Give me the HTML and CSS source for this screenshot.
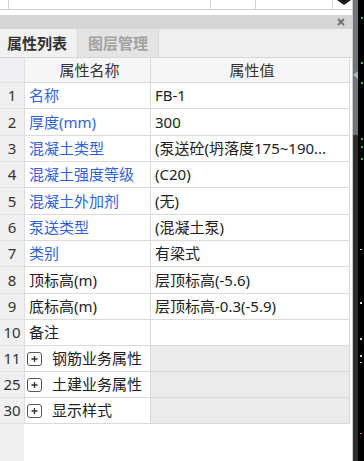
FILE: index.html
```html
<!DOCTYPE html>
<html lang="zh-CN">
<head>
<meta charset="utf-8">
<title>属性列表</title>
<link rel="stylesheet" href="styles.css">
</head>
<body>
<div class="panel">
  <div class="topstrip">
    <div class="tc c1"></div>
    <div class="tc c2"></div>
    <div class="tc c3"></div>
    <div class="tc c4"></div>
    <div class="tc c5"><svg class="drop" width="14" height="5" viewBox="0 0 14 5"><polygon points="0,0 14,0 7,5" fill="#1a1a1a"/></svg></div>
  </div>
  <div class="titlebar">
    <svg class="close" width="8" height="8" viewBox="0 0 8 8"><path d="M1 1 L7 7 M7 1 L1 7" stroke="#6f6f6f" stroke-width="1.8" fill="none"/></svg>
  </div>
  <div class="tabs">
    <div class="tab active">属性列表</div>
    <div class="tab inactive">图层管理</div>
    <div class="tabfill"></div>
  </div>
  <div class="gridwrap">
    <div class="grid">
      <div class="cell n hn"></div><div class="cell k h">属性名称</div><div class="cell v h">属性值</div>

      <div class="cell n">1</div><div class="cell k blue">名称</div><div class="cell v">FB-1</div>
      <div class="cell n">2</div><div class="cell k blue">厚度(mm)</div><div class="cell v">300</div>
      <div class="cell n">3</div><div class="cell k blue">混凝土类型</div><div class="cell v">(泵送砼(坍落度175~190...</div>
      <div class="cell n">4</div><div class="cell k blue">混凝土强度等级</div><div class="cell v">(C20)</div>
      <div class="cell n">5</div><div class="cell k blue">混凝土外加剂</div><div class="cell v">(无)</div>
      <div class="cell n">6</div><div class="cell k blue">泵送类型</div><div class="cell v">(混凝土泵)</div>
      <div class="cell n">7</div><div class="cell k blue">类别</div><div class="cell v">有梁式</div>
      <div class="cell n">8</div><div class="cell k">顶标高(m)</div><div class="cell v">层顶标高(-5.6)</div>
      <div class="cell n">9</div><div class="cell k">底标高(m)</div><div class="cell v">层顶标高-0.3(-5.9)</div>
      <div class="cell n">10</div><div class="cell k">备注</div><div class="cell v"></div>

      <div class="cell n">11</div><div class="cell k grp"><svg class="plus" width="15" height="14" viewBox="0 0 15 14"><rect x="0.5" y="0.5" width="14" height="13" rx="2.5" fill="#fff" stroke="#555"/><path d="M4.5 7 H10.5 M7.5 4 V10" stroke="#333" stroke-width="1.3"/></svg>钢筋业务属性</div><div class="cell v gv"></div>
      <div class="cell n">25</div><div class="cell k grp"><svg class="plus" width="15" height="14" viewBox="0 0 15 14"><rect x="0.5" y="0.5" width="14" height="13" rx="2.5" fill="#fff" stroke="#555"/><path d="M4.5 7 H10.5 M7.5 4 V10" stroke="#333" stroke-width="1.3"/></svg>土建业务属性</div><div class="cell v gv"></div>
      <div class="cell n">30</div><div class="cell k grp"><svg class="plus" width="15" height="14" viewBox="0 0 15 14"><rect x="0.5" y="0.5" width="14" height="13" rx="2.5" fill="#fff" stroke="#555"/><path d="M4.5 7 H10.5 M7.5 4 V10" stroke="#333" stroke-width="1.3"/></svg>显示样式</div><div class="cell v gv"></div>
    </div>
  </div>
</div>
<div class="scroll">
  <svg class="arrow" width="5" height="8" viewBox="0 0 5 8"><polygon points="5,0 5,8 0,4" fill="#b0b4b8"/></svg>
</div>
<div class="edge">
  <svg width="6" height="461" viewBox="0 0 6 461">
    <rect x="3" y="17" width="2" height="2" fill="#2fbf3a"/>
    <rect x="3" y="62" width="2" height="2" fill="#2fbf3a"/>
    <rect x="3" y="82" width="2" height="2" fill="#2fbf3a"/>
    <rect x="3" y="138" width="2" height="2" fill="#2fbf3a"/>
    <rect x="3" y="146" width="2" height="2" fill="#2fbf3a"/>
    <rect x="3" y="158" width="2" height="2" fill="#2fbf3a"/>
    <rect x="2" y="249" width="2" height="1" fill="#cfcfcf"/>
    <rect x="2" y="302" width="2" height="2" fill="#e0e0e0"/>
    <rect x="2" y="338" width="2" height="2" fill="#d0d0d0"/>
    <rect x="2" y="355" width="2" height="2" fill="#d0d0d0"/>
    <rect x="2" y="362" width="2" height="1" fill="#bbbbbb"/>
    <rect x="2" y="433" width="2" height="1" fill="#c7782c"/>
  </svg>
</div>
</body>
</html>
```

FILE: styles.css
```css
* {
  box-sizing: border-box;
  margin: 0;
  padding: 0;
}

html, body {
  width: 364px;
  height: 461px;
  overflow: hidden;
}

body {
  display: flex;
  background: #000;
  font-family: "Noto Sans", "Noto Sans CJK SC", sans-serif;
  font-size: 15px;
  color: #222;
}

.panel {
  width: 353px;
  display: flex;
  flex-direction: column;
  background: #fff;
  border-right: 1px solid #cdcdcd;
}

/* strip of the table above the panel */
.topstrip {
  height: 15px;
  display: flex;
  align-items: flex-start;
}

.tc {
  height: 10px;
  border-right: 1px solid #d2d2d2;
  border-bottom: 1px solid #d2d2d2;
}

.c1 { width: 9px; }
.c2 { width: 202px; }
.c3 { width: 45px; }
.c4 { width: 77px; }
.c5 {
  flex: 1;
  border-right: none;
  display: flex;
  align-items: flex-start;
}

.drop {
  display: block;
  margin-left: 4px;
}

.titlebar {
  height: 14px;
  background: #d5d5d5;
  display: flex;
  align-items: center;
  justify-content: flex-end;
  padding-right: 7px;
}

.close {
  display: block;
}

.tabs {
  height: 28px;
  display: flex;
  background: #efefef;
}

.tab {
  display: flex;
  align-items: center;
  font-weight: bold;
  font-size: 15px;
  line-height: 1;
}

.tab.active {
  width: 77px;
  padding-left: 7px;
  color: #333;
  background: #f1f1f1;
}

.tab.inactive {
  width: 82px;
  justify-content: center;
  color: #a2a2a2;
  background: #e4e4e4;
  border-left: 1px solid #d9d9d9;
  border-right: 1px solid #d9d9d9;
}

.tabfill {
  flex: 1;
}

.gridwrap {
  flex: 1;
  border-top: 1px solid #d6d6d6;
  background: linear-gradient(to right, #f0f0f0 24px, #fff 24px);
}

.grid {
  display: grid;
  grid-template-columns: 25px 126px 199px;
  grid-template-rows: 25px 26px 27px 26px 26px 27px 26px 26px 27px 26px 26px 26px 26px 26px;
}

.cell {
  display: flex;
  align-items: center;
  border-right: 1px solid #dadada;
  border-bottom: 1px solid #dadada;
  white-space: nowrap;
  overflow: hidden;
  line-height: 1;
  background: #fff;
}

.n {
  justify-content: center;
  background: #f0f0f0;
  color: #333;
  border-right-color: #dedede;
  border-bottom-color: #e2e2e2;
}

.hn {
  background: #eef0f4;
}

.h {
  justify-content: center;
  background: #f6f6f6;
  color: #333;
}

.k {
  padding-left: 4px;
}

.v {
  padding-left: 4px;
}

.blue {
  color: #2f63d6;
}

.grp {
  padding-left: 2px;
  color: #222;
}

.plus {
  display: block;
  flex: none;
  margin-right: 10px;
}

.gv {
  background: #ebebeb;
}

.scroll {
  width: 5px;
  background: linear-gradient(to bottom, #6e757c 0, #6e757c 135px, #2d2d2d 135px);
  padding-top: 71px;
}

.arrow {
  display: block;
}

.edge {
  width: 6px;
  background: #000;
}

.edge svg {
  display: block;
}
```
